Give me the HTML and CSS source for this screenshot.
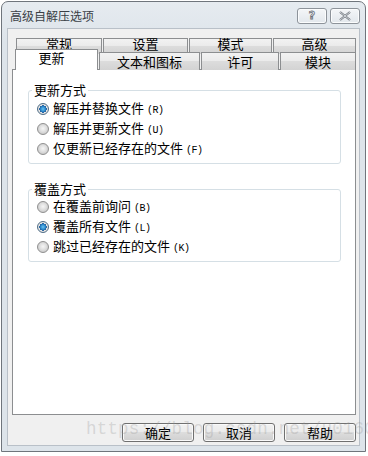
FILE: index.html
```html
<!DOCTYPE html>
<html>
<head>
<meta charset="utf-8">
<link rel="stylesheet" href="styles.css">
</head>
<body>
<div class="window">
  <div class="titlebar">
    <span class="title">高级自解压选项</span>
    <div class="tbtns">
      <span class="tbtn help">?</span>
      <span class="tbtn close">
        <svg width="14" height="10" viewBox="0 0 14 10"><path d="M2 1 L12 9 M12 1 L2 9" stroke="#6b7078" stroke-width="2.2" fill="none"/><path d="M2 1 L12 9 M12 1 L2 9" stroke="#e9edf1" stroke-width="0.8" fill="none"/></svg>
      </span>
    </div>
  </div>
  <div class="client">
    <div class="tabs">
      <div class="row row1">
        <span class="tab w86"><span class="lbl">常规</span></span>
        <span class="tab w85"><span class="lbl">设置</span></span>
        <span class="tab w83"><span class="lbl">模式</span></span>
        <span class="tab w83"><span class="lbl">高级</span></span>
      </div>
      <div class="row row2">
        <span class="tab sel">更新</span>
        <span class="tab w102">文本和图标</span>
        <span class="tab w78">许可</span>
        <span class="tab w76">模块</span>
      </div>
    </div>
    <div class="panel">
      <fieldset class="group g1">
        <legend>更新方式</legend>
        <div class="opt"><span class="radio on"></span><span>解压并替换文件<small>(R)</small></span></div>
        <div class="opt"><span class="radio"></span><span>解压并更新文件<small>(U)</small></span></div>
        <div class="opt"><span class="radio"></span><span>仅更新已经存在的文件<small>(F)</small></span></div>
      </fieldset>
      <fieldset class="group g2">
        <legend>覆盖方式</legend>
        <div class="opt"><span class="radio"></span><span>在覆盖前询问<small>(B)</small></span></div>
        <div class="opt"><span class="radio on"></span><span>覆盖所有文件<small>(L)</small></span></div>
        <div class="opt"><span class="radio"></span><span>跳过已经存在的文件<small>(K)</small></span></div>
      </fieldset>
    </div>
    <div class="buttons">
      <span class="btn">确定</span>
      <span class="btn">取消</span>
      <span class="btn">帮助</span>
    </div>
    <div class="watermark">https://blog.csdn.net/u01603</div>
  </div>
</div>
</body>
</html>
```
FILE: styles.css
```css
* { box-sizing: border-box; }
html, body { margin: 0; padding: 0; background: #ffffff; }
body {
  font-family: "Noto Sans CJK SC", "Noto Sans", sans-serif;
  font-size: 13px;
  color: #000;
}
.window {
  margin: 1px 0 0 1px;
  width: 365px;
  height: 451px;
  border: 1px solid #6f757c;
  border-radius: 7px 7px 0 0;
  background: linear-gradient(#e6ebf0, #dde4ea 40px, #dde4ea);
  display: flex;
  flex-direction: column;
  padding: 0 5px 5px 5px;
}
.titlebar {
  height: 26px;
  display: flex;
  align-items: center;
  justify-content: space-between;
  padding-left: 3px;
}
.title {
  font-size: 12px;
  color: #3a3f46;
  line-height: 14px;
  margin-top: 2px;
}
.tbtns {
  display: flex;
  gap: 3px;
  margin-top: 1px;
}
.tbtn {
  height: 16px;
  border: 1px solid #8d939a;
  border-radius: 3px;
  background: linear-gradient(#f4f6f8, #e2e7ec);
  display: flex;
  align-items: center;
  justify-content: center;
  box-shadow: inset 0 0 0 1px #fbfcfd;
}
.tbtn.help {
  width: 30px;
  font-family: "DejaVu Sans", sans-serif;
  font-weight: bold;
  font-size: 11px;
  color: #e9edf1;
  -webkit-text-stroke: 0.8px #6b7078;
  line-height: 12px;
}
.tbtn.close { width: 30px; }
.client {
  flex: 1;
  position: relative;
  background: #f0f0f0;
  border: 1px solid #b9c0c8;
  padding: 9px 3px 0 3px;
  display: flex;
  flex-direction: column;
}
.tabs {
  position: relative;
  z-index: 2;
  margin-bottom: -1px;
}
.row { display: flex; gap: 1px; }
.row1 { padding-left: 5px; height: 14px; }
.row2 { padding-left: 4px; height: 18px; }
.tab {
  display: flex;
  justify-content: center;
  align-items: center;
  border: 1px solid #8c8e90;
  border-bottom: none;
  background: linear-gradient(#f2f2f2, #ebebeb 45%, #dcdcdc 50%, #d3d3d3);
  font-size: 13px;
  line-height: 14px;
}
.row1 .tab {
  height: 16px;
  align-items: flex-start;
}
.lbl {
  display: block;
  line-height: 13px;
  margin-top: -2px;
  position: relative;
  z-index: 3;
}
.row2 .tab { height: 18px; padding-top: 1px; }
.w86 { width: 86px; }
.w85 { width: 85px; }
.w83 { width: 83px; }
.w102 { width: 102px; }
.w78 { width: 78px; }
.w76 { width: 76px; }
.row2 .tab.sel {
  width: 83px;
  height: 21px;
  margin-top: -3px;
  background: #ffffff;
  padding-top: 1px;
  padding-right: 10px;
  align-items: flex-start;
  position: relative;
  z-index: 4;
}
.panel {
  margin: 0 0 0 1px;
  width: 344px;
  height: 346px;
  border: 1px solid #8c8e90;
  background: #ffffff;
  padding: 12px 14px 0 15px;
  position: relative;
  z-index: 1;
}
.group {
  margin: 0;
  min-width: 0;
  border: 1px solid #d5dfe5;
  border-radius: 3px;
  padding: 0 0 4px 8px;
}
.group legend {
  padding: 0 2px;
  margin-left: -5px;
  font-size: 13px;
  line-height: 16px;
}
.g2 { margin-top: 17px; }
.opt {
  display: flex;
  align-items: center;
  height: 20px;
  gap: 4px;
  line-height: 16px;
}
.opt small {
  font-family: "Liberation Mono", monospace;
  font-size: 10px;
  margin-left: 3px;
  letter-spacing: -0.5px;
}
.radio {
  width: 12px;
  height: 12px;
  border-radius: 50%;
  border: 1px solid #8f8f8f;
  background: radial-gradient(circle at 50% 45%, #f6f6f6 0, #e4e4e4 35%, #cfcfcf 70%, #dedede 100%);
  flex: none;
}
.radio.on {
  border-color: #4f6d86;
  background:
    radial-gradient(circle at 50% 50%, #6bc3f2 0, #2a86c8 2.5px, #13559a 3.5px, rgba(0,0,0,0) 3.8px),
    radial-gradient(circle, #f8f8f8 0, #e0e0e0 70%, #d0d0d0 100%);
}
.g1 .opt:first-of-type { margin-top: 1px; }
.buttons {
  display: flex;
  justify-content: flex-end;
  gap: 9px;
  margin-top: 8px;
  width: 345px;
}
.btn {
  width: 72px;
  height: 19px;
  border: 1px solid #707070;
  border-radius: 3px;
  background: linear-gradient(#f2f2f2, #ebebeb 45%, #dddddd 50%, #cfcfcf);
  box-shadow: inset 0 0 0 1px #fafafa;
  display: flex;
  justify-content: center;
  align-items: center;
  font-size: 13px;
  line-height: 15px;
}
.watermark {
  position: absolute;
  left: 78px;
  top: 389px;
  font-family: "Liberation Mono", monospace;
  font-size: 17.5px;
  line-height: 22px;
  color: rgba(150,150,150,0.3);
  letter-spacing: 0.2px;
  pointer-events: none;
  z-index: 5;
}
```
